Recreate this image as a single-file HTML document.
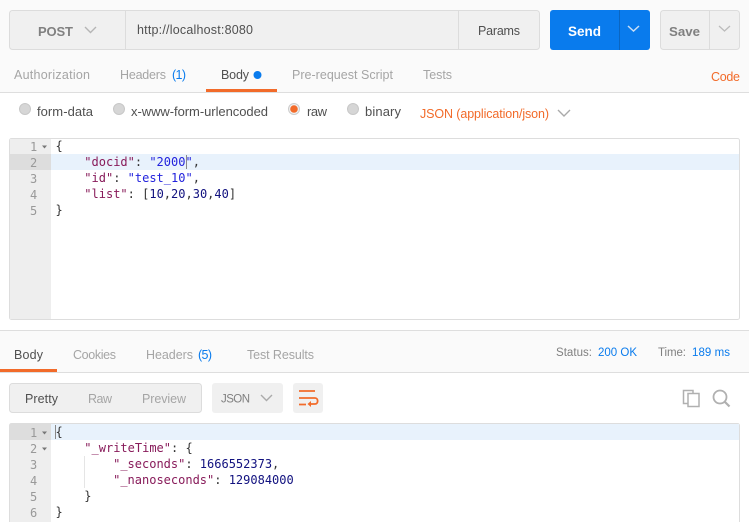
<!DOCTYPE html>
<html><head><meta charset="utf-8"><style>
html,body{margin:0;padding:0;background:#fff}
svg{display:block}
text{font-family:"Liberation Sans",sans-serif;font-size:12.5px}
.g{fill:#a5a5a5}.d{fill:#505050}.o{fill:#f26b2a}.b{fill:#097bed}
.r{font-size:13px}
.m{font-family:"DejaVu Sans Mono",monospace;font-size:12px;fill:#333;white-space:pre}
.n{font-family:"DejaVu Sans Mono",monospace;fill:#999;font-size:12px}
.k{fill:#881b5a}.s{fill:#2222dd}.u{fill:#11117f}
</style></head><body>
<svg width="749" height="522" viewBox="0 0 749 522" xmlns="http://www.w3.org/2000/svg">
<rect width="749" height="522" fill="#fff"/>
<rect width="749" height="92" fill="#fafafa"/>
<rect x="9.500" y="10.500" width="530" height="39" rx="3" fill="#f0f0f0" stroke="#dcdcdc"/>
<path d="M125.500 11V49M458.500 11V49" stroke="#dcdcdc"/>
<text x="38" y="36" textLength="35" style="font-weight:bold;font-size:13px" fill="#808080">POST</text>
<path d="M85 27l5.500 5.500L96 27" fill="none" stroke="#b5b5b5" stroke-width="1.400"/>
<text x="137" y="34" textLength="116" class="d">http://localhost:8080</text>
<text x="478" y="35" textLength="42" class="d">Params</text>
<rect x="550" y="10" width="100" height="40" rx="3" fill="#097bed"/>
<path d="M619.500 10V50" stroke="#0a66c2"/>
<text x="568" y="36" textLength="33" style="font-weight:bold;font-size:13.500px" fill="#fff">Send</text>
<path d="M628 26l5.500 5 5.500-5" fill="none" stroke="#c9def5" stroke-width="1.500"/>
<rect x="660.500" y="10.500" width="79" height="39" rx="3" fill="#f0f0f0" stroke="#dcdcdc"/>
<path d="M709.500 11V49" stroke="#dcdcdc"/>
<text x="669" y="36" textLength="31" style="font-weight:bold;font-size:13.300px" fill="#808080">Save</text>
<path d="M719 26l5.500 5 5.500-5" fill="none" stroke="#bbb" stroke-width="1.300"/>

<text x="14" y="79" textLength="76" class="g">Authorization</text>
<text x="120" y="79" textLength="46" class="g">Headers</text>
<text x="172" y="79" textLength="14" class="b">(1)</text>
<text x="221" y="79" textLength="28" class="d">Body</text>
<circle cx="257.500" cy="75" r="4" fill="#097bed"/>
<text x="292" y="79" textLength="101" class="g">Pre-request Script</text>
<text x="423" y="79" textLength="29" class="g">Tests</text>
<text x="711" y="81" textLength="29" class="o">Code</text>
<rect y="92" width="749" height="1" fill="#dedede"/>
<rect x="206" y="89" width="71" height="3" fill="#f26b2a"/>

<circle cx="25" cy="109" r="5.500" fill="#d6d6d6" stroke="#c8c8c8"/>
<text x="37" y="116" textLength="56" class="d r">form-data</text>
<circle cx="119" cy="109" r="5.500" fill="#d6d6d6" stroke="#c8c8c8"/>
<text x="131" y="116" textLength="137" class="d r">x-www-form-urlencoded</text>
<circle cx="294" cy="109" r="5.500" fill="#f0f0f0" stroke="#ccc"/>
<circle cx="294" cy="109" r="3.800" fill="#f26b2a"/>
<text x="307" y="116" textLength="20" class="d r">raw</text>
<circle cx="353" cy="109" r="5.500" fill="#d6d6d6" stroke="#c8c8c8"/>
<text x="365" y="116" textLength="36" class="d r">binary</text>
<text x="420" y="118" textLength="129" class="o">JSON (application/json)</text>
<path d="M558 110l6 6 6-6" fill="none" stroke="#aaa" stroke-width="1.400"/>

<rect x="9.500" y="138.500" width="730" height="181" rx="2" fill="#fff" stroke="#ddd"/>
<rect x="10" y="139" width="41" height="180" fill="#eee"/>
<rect x="10" y="154" width="41" height="16" fill="#ddd"/>
<rect x="51" y="154" width="688" height="16" fill="#e8f2fc"/>
<text class="n" x="30" y="151">1</text><text class="n" x="30" y="167">2</text><text class="n" x="30" y="183">3</text><text class="n" x="30" y="199">4</text><text class="n" x="30" y="215">5</text>
<path d="M42 145.500h5l-2.500 3z" fill="#777"/>
<text class="m" x="55.500" y="150">{</text>
<text class="m" x="84.300" y="166"><tspan class="k">"docid"</tspan>: <tspan class="s">"2000"</tspan>,</text>
<rect x="186" y="155" width="1" height="14" fill="#888"/>
<text class="m" x="84.300" y="182"><tspan class="k">"id"</tspan>: <tspan class="s">"test_10"</tspan>,</text>
<text class="m" x="84.300" y="198"><tspan class="k">"list"</tspan>: [<tspan class="u">10</tspan>,<tspan class="u">20</tspan>,<tspan class="u">30</tspan>,<tspan class="u">40</tspan>]</text>
<text class="m" x="55.500" y="214">}</text>

<rect y="330" width="749" height="42" fill="#fafafa"/>
<rect y="330" width="749" height="1" fill="#dedede"/>
<rect y="372" width="749" height="1" fill="#dedede"/>
<rect y="369" width="57" height="3" fill="#f26b2a"/>
<text x="14" y="359" textLength="29" class="d">Body</text>
<text x="73" y="359" textLength="43" class="g">Cookies</text>
<text x="146" y="359" textLength="47" class="g">Headers</text>
<text x="198" y="359" textLength="14" class="b">(5)</text>
<text x="247" y="359" textLength="67" class="g">Test Results</text>
<text x="556" y="356" textLength="36" style="font-size:11.500px" fill="#808080">Status:</text>
<text x="598" y="356" textLength="39" style="font-size:11.500px" class="b">200 OK</text>
<text x="658" y="356" textLength="28" style="font-size:11.500px" fill="#808080">Time:</text>
<text x="692" y="356" textLength="38" style="font-size:11.500px" class="b">189 ms</text>

<rect x="9.500" y="383.500" width="192" height="29" rx="3" fill="#f0f0f0" stroke="#dcdcdc"/>
<text x="25" y="403" textLength="33" class="d">Pretty</text>
<text x="88" y="403" textLength="24" class="g">Raw</text>
<text x="142" y="403" textLength="44" class="g">Preview</text>
<rect x="212" y="383" width="71" height="30" rx="3" fill="#f0f0f0"/>
<text x="221" y="402.500" textLength="29" style="font-size:11.500px" fill="#808080">JSON</text>
<path d="M261 395l5.500 5.500 5.500-5.500" fill="none" stroke="#aaa" stroke-width="1.400"/>
<rect x="293" y="383" width="30" height="30" rx="3" fill="#f0f0f0"/>
<path d="M299 391h16M299 398h16c3.500 0 3.500 6 0 6h-6M299 404.500h7" fill="none" stroke="#f26b2a" stroke-width="1.800"/>
<path d="M311 401l-3.500 3 3.500 3z" fill="#f26b2a"/>
<path d="M688 403.500h-4.500V390.500h9.500V393" fill="none" stroke="#b0b0b0" stroke-width="1.500"/>
<rect x="688" y="393.500" width="11" height="13" fill="#fff" stroke="#b0b0b0" stroke-width="1.500"/>
<circle cx="720" cy="397" r="6.500" fill="none" stroke="#b0b0b0" stroke-width="1.800"/>
<path d="M725 402l4.500 4.500" stroke="#b0b0b0" stroke-width="2.200"/>

<rect x="9.500" y="423.500" width="730" height="110" rx="2" fill="#fff" stroke="#ddd"/>
<rect x="10" y="424" width="41" height="98" fill="#eee"/>
<rect x="10" y="424" width="41" height="16" fill="#ddd"/>
<rect x="51" y="424" width="688" height="16" fill="#e8f2fc"/>
<rect x="55" y="425" width="1" height="14" fill="#888"/>
<text class="n" x="30" y="437">1</text><text class="n" x="30" y="453">2</text><text class="n" x="30" y="469">3</text><text class="n" x="30" y="485">4</text><text class="n" x="30" y="501">5</text><text class="n" x="30" y="517">6</text>
<path d="M42 431.500h5l-2.500 3zM42 447.500h5l-2.500 3z" fill="#777"/>
<path d="M84.500 456V488" stroke="#e5e5e5"/>
<text class="m" x="55.500" y="436">{</text>
<text class="m" x="84.300" y="452"><tspan class="k">"_writeTime"</tspan>: {</text>
<text class="m" x="113.100" y="468"><tspan class="k">"_seconds"</tspan>: <tspan class="u">1666552373</tspan>,</text>
<text class="m" x="113.100" y="484"><tspan class="k">"_nanoseconds"</tspan>: <tspan class="u">129084000</tspan></text>
<text class="m" x="84.300" y="500">}</text>
<text class="m" x="55.500" y="516">}</text>
</svg>
</body></html>
